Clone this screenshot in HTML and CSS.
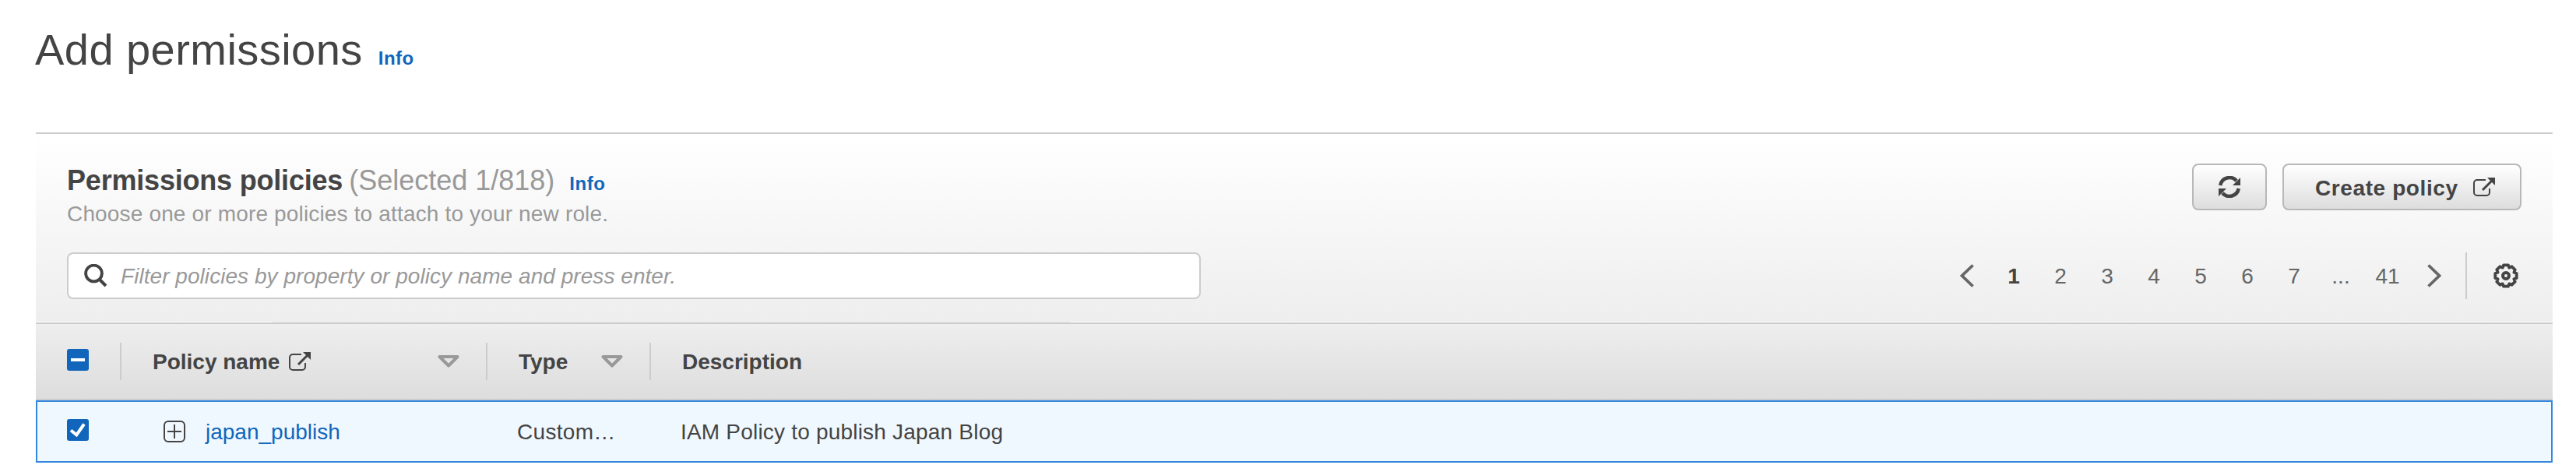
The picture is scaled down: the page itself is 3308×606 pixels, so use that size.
FILE: index.html
```html
<!DOCTYPE html>
<html lang="en">
<head>
<meta charset="utf-8">
<title>Add permissions</title>
<link rel="stylesheet" href="styles.css">
</head>
<body>
<header class="page-header">
  <h1 class="page-title">Add permissions</h1>
  <a class="info">Info</a>
</header>
<section class="panel">
  <div class="panel-head">
    <div class="top-row">
      <div>
        <div class="heading">
          <h2 class="panel-title">Permissions policies</h2>
          <span class="count">(Selected 1/818)</span>
          <a class="info">Info</a>
        </div>
        <p class="subtitle">Choose one or more policies to attach to your new role.</p>
      </div>
      <div class="actions">
        <button class="btn btn-icon" aria-label="Refresh">
          <svg width="28" height="28" viewBox="0 0 28 28"><path d="M2.200 12A12 12 0 0 1 23 6.100M25.800 16A12 12 0 0 1 5 21.900" fill="none" stroke="#444" stroke-width="4.600"/><path d="M28 2v10H18zM0 26V16h10z" fill="#444"/></svg>
        </button>
        <button class="btn btn-create">
          <span class="btn-label">Create policy</span>
          <svg width="28" height="24" viewBox="0 0 28 24"><path d="M16 3H5a4 4 0 0 0-4 4v12a4 4 0 0 0 4 4h12a4 4 0 0 0 4-4v-5" fill="none" stroke="#444" stroke-width="2"/><path d="M12 16L24 4" stroke="#444" stroke-width="3"/><path d="M18 0h10v10z" fill="#444"/></svg>
        </button>
      </div>
    </div>
    <div class="tool-row">
      <div class="search">
        <svg width="30" height="30" viewBox="0 0 30 30" fill="none" stroke="#444"><circle cx="12.500" cy="12" r="10.400" stroke-width="3.800"/><path d="M19.500 19.500L28 28" stroke-width="4"/></svg>
        <span class="placeholder">Filter policies by property or policy name and press enter.</span>
      </div>
      <nav class="pages">
        <svg class="prev" width="18" height="30" viewBox="0 0 18 30"><path d="M16.500 1.500L2.500 15l14 13.500" fill="none" stroke="#666" stroke-width="3.800"/></svg>
        <span class="page current">1</span><span class="page">2</span><span class="page">3</span><span class="page">4</span><span class="page">5</span><span class="page">6</span><span class="page">7</span><span class="page">...</span><span class="page">41</span>
        <svg class="next" width="18" height="30" viewBox="0 0 18 30"><path d="M1.500 1.500L15.500 15l-14 13.500" fill="none" stroke="#666" stroke-width="3.800"/></svg>
        <span class="rule"></span>
        <svg class="gear" width="32" height="32" viewBox="0 0 32 32" fill="none" stroke="#444"><path d="M13.090 2.310L18.910 2.310 20.290 5.650 23.620 4.260 27.740 8.380 26.350 11.710 29.690 13.090 29.690 18.910 26.350 20.290 27.740 23.620 23.620 27.740 20.290 26.350 18.910 29.690 13.090 29.690 11.710 26.350 8.380 27.740 4.260 23.620 5.650 20.290 2.310 18.910 2.310 13.090 5.650 11.710 4.260 8.380 8.380 4.260 11.710 5.650z" stroke-width="3.800" stroke-linejoin="round"/><circle cx="16" cy="16" r="4" stroke-width="4"/></svg>
      </nav>
    </div>
  </div>
  <div class="seam"></div>
  <div class="grid columns">
    <div class="cell first"><svg class="check" width="28" height="28" viewBox="0 0 28 28"><rect width="28" height="28" rx="3" fill="#16b"/><path d="M5 14h18" stroke="#fff" stroke-width="4"/></svg></div>
    <div class="cell name">
      <span>Policy name</span>
      <svg class="ext" width="28" height="24" viewBox="0 0 28 24"><path d="M16 3H5a4 4 0 0 0-4 4v12a4 4 0 0 0 4 4h12a4 4 0 0 0 4-4v-5" fill="none" stroke="#444" stroke-width="2"/><path d="M12 16L24 4" stroke="#444" stroke-width="3"/><path d="M18 0h10v10z" fill="#444"/></svg>
      <svg class="sort" width="28" height="16" viewBox="0 0 28 16"><path d="M2.500 2h23L14 13.500z" fill="none" stroke="#999" stroke-width="4" stroke-linejoin="round"/></svg>
    </div>
    <div class="cell type">
      <span>Type</span>
      <svg class="sort" width="28" height="16" viewBox="0 0 28 16"><path d="M2.500 2h23L14 13.500z" fill="none" stroke="#999" stroke-width="4" stroke-linejoin="round"/></svg>
    </div>
    <div class="cell desc">Description</div>
  </div>
  <div class="grid record">
    <div class="cell first"><svg class="check" width="28" height="28" viewBox="0 0 28 28"><rect width="28" height="28" rx="3" fill="#16b"/><path d="M5 14.500L12.300 20.300 22 6.500" fill="none" stroke="#fff" stroke-width="4"/></svg></div>
    <div class="cell name">
      <svg class="expand" width="28" height="28" viewBox="0 0 28 28" fill="none" stroke="#444" stroke-width="2"><rect x="1" y="1" width="26" height="26" rx="5"/><path d="M5 14h18M14 5v18"/></svg>
      <a class="link">japan_publish</a>
    </div>
    <div class="cell type">Custom…</div>
    <div class="cell desc">IAM Policy to publish Japan Blog</div>
  </div>
</section>
</body>
</html>
```
FILE: styles.css
```css
* { box-sizing: border-box; }
body {
  margin: 0;
  background: #fff;
  color: #444;
  font: 28px/37px "Liberation Sans", Arial, sans-serif;
}
h1, h2, p { margin: 0; }
svg { display: block; flex: none; }

.page-header {
  display: flex;
  align-items: baseline;
  height: 170px;
  padding: 32px 0 0 45px;
}
.page-title {
  font-size: 56px;
  line-height: 64px;
  font-weight: 400;
  letter-spacing: 0.45px;
}
.info {
  margin-left: 20px;
  color: #16b;
  font-size: 24px;
  font-weight: 700;
  letter-spacing: 0.5px;
}

.panel {
  margin: 0 30px 0 46px;
  border-top: 2px solid #ccc;
}
.panel-head {
  height: 241px;
  padding: 38px 40px 0;
  background: linear-gradient(#fff, #eee);
}
.top-row {
  display: flex;
  justify-content: space-between;
  height: 114px;
}
.heading {
  display: flex;
  align-items: baseline;
  height: 44px;
  line-height: 44px;
}
.panel-title { font-size: 36px; letter-spacing: -0.2px; }
.count {
  margin-left: 8px;
  color: #999;
  font-size: 36px;
}
.heading .info { margin-left: 19px; }
.subtitle {
  margin-top: 2px;
  color: #999;
  letter-spacing: 0.16px;
}

.actions { display: flex; gap: 20px; }
.btn {
  display: flex;
  align-items: center;
  height: 60px;
  border: 2px solid #b8b8b8;
  border-radius: 8px;
  background: linear-gradient(#fff, #ddd);
  color: #444;
  font: 700 28px/37px "Liberation Sans", Arial, sans-serif;
  letter-spacing: 0.6px;
}
.btn-label { margin-top: 2px; }
.btn-icon {
  justify-content: center;
  width: 96px;
  padding: 0;
}
.btn-create {
  justify-content: space-between;
  width: 307px;
  padding: 0 32px 0 40px;
}

.tool-row { display: flex; justify-content: space-between; }
.search {
  display: flex;
  align-items: center;
  width: 1456px;
  height: 60px;
  padding: 0 20px;
  border: 2px solid #ccc;
  border-radius: 8px;
  background: #fff;
}
.placeholder {
  margin-left: 17px;
  color: #999;
  font-style: italic;
  letter-spacing: 0.05px;
}

.pages {
  display: flex;
  align-items: center;
  height: 60px;
  padding-right: 4px;
  color: #666;
}
.page { width: 60px; text-align: center; }
.current { color: #444; font-weight: 700; }
.prev { margin-right: 21px; }
.next { margin-left: 21px; }
.rule {
  width: 2px;
  height: 60px;
  margin: 0 34px 0 31px;
  background: #ccc;
}

.seam {
  height: 1px;
  background: linear-gradient(90deg, #fff 304px, #eee 304px, #eee 1328px, #fff 1328px);
}
.grid {
  display: grid;
  grid-template-columns: 110px 470px 210px 1fr;
}
.columns {
  height: 100px;
  border-top: 2px solid #ccc;
  border-bottom: 2px solid #ccc;
  background: linear-gradient(#eee, #ddd);
  font-weight: 700;
}
.columns .cell {
  align-self: center;
  height: 48px;
  border-right: 2px solid #ccc;
}
.columns .cell:last-child { border-right: 0; }
.record {
  height: 80px;
  background: #f0f8ff;
  box-shadow: inset 0 0 0 2px #38d;
}
.cell {
  display: flex;
  align-items: center;
  padding-left: 40px;
}
.check { margin-bottom: 4px; }
.ext { margin-left: 12px; }
.sort { margin: 0 34px 0 auto; }
.record .name { padding-left: 54px; }
.record .type { padding-left: 38px; letter-spacing: 0.3px; }
.record .desc { padding-left: 38px; letter-spacing: 0.2px; }
.link { margin-left: 26px; color: #16b; }
```
